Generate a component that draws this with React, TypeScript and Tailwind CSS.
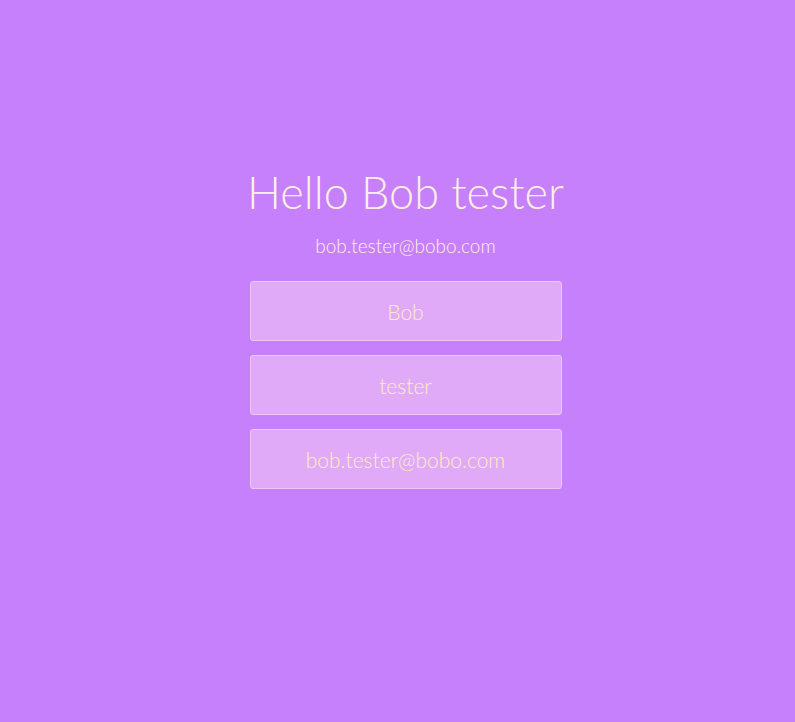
export default function App() {
  const fields = ["Bob", "tester", "bob.tester@bobo.com"];

  return (
    <div className="min-h-screen w-full bg-[#c680fb] flex flex-col items-center pt-[164px] pl-[16px] font-['Lato','Open_Sans',sans-serif] font-light text-[#fdf0e0]">
      <h1 className="text-[45px] leading-[56px] font-light">Hello Bob tester</h1>
      <p className="mt-[14px] text-[19px] leading-[24px]">bob.tester@bobo.com</p>
      <div className="mt-[23px] flex flex-col gap-[14px]">
        {fields.map((f) => (
          <input
            key={f}
            type="text"
            defaultValue={f}
            className="w-[312px] h-[60px] rounded-[3px] border border-[#ecc6f9] bg-[#e0aaf8] text-center text-[21px] font-light text-[#fdecc4] focus:outline-none"
          />
        ))}
      </div>
    </div>
  );
}
